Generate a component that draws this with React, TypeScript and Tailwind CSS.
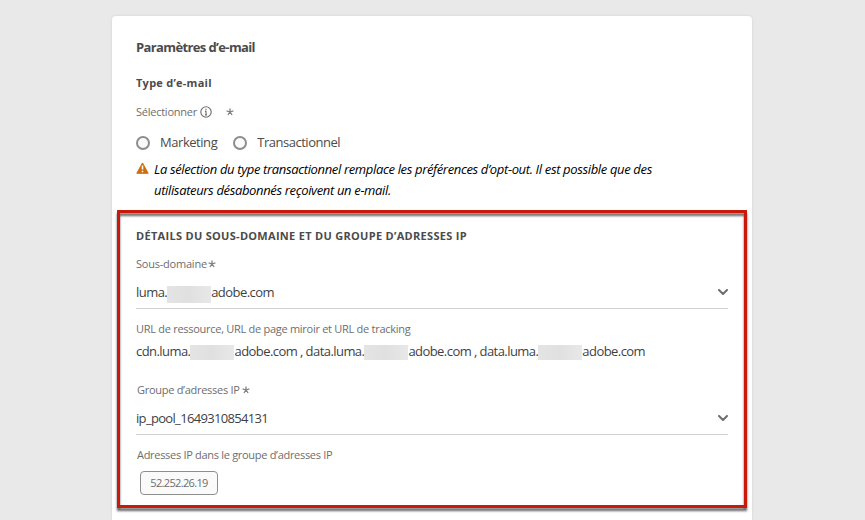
import React from 'react';

function Star({ className = '' }: { className?: string }) {
  return (
    <svg viewBox="0 0 8 8" className={`h-2 w-2 shrink-0 ${className}`} fill="none" stroke="#808080" strokeWidth="1.3">
      <path d="M4 4V.4M4 4 .6 2.9M4 4l3.4-1.1M4 4 1.9 7M4 4l2.1 3" />
    </svg>
  );
}

function Chevron() {
  return (
    <svg viewBox="0 0 10 6" className="mb-px h-1.5 w-2.5 shrink-0" fill="none" stroke="#6e6e6e" strokeWidth="2">
      <path d="m1 1 4 4 4-4" strokeLinecap="round" strokeLinejoin="round" />
    </svg>
  );
}

function Redacted({ className }: { className: string }) {
  return <span className={`w-11 shrink-0 bg-linear-to-r from-[#e4e4e4] via-[#e0e0e0] to-[#e8e8e8] ${className}`} />;
}

function Radio({ label, className }: { label: string; className: string }) {
  return (
    <label className={`flex items-center ${className}`}>
      <span className="mt-px h-3.5 w-3.5 shrink-0 rounded-full border-2 border-[#8e8e8e] bg-[#fafafa]" />
      <span className="ml-2.5 text-[13px] text-[#4b4b4b]">{label}</span>
    </label>
  );
}

export default function App() {
  return (
    <div className="flex h-[520px] w-[865px] items-stretch overflow-hidden bg-[#e9e9e9] pt-4 pl-28 font-['Open_Sans','Noto_Sans',sans-serif] leading-5 whitespace-nowrap">
      <main className="w-[640px] rounded-t-[4px] bg-white pt-[21px] shadow-[0_0_3px_rgba(0,0,0,0.1)]">
        <section className="px-6">
          <h1 className="flex h-5 text-[13px] font-bold tracking-[-0.62px] text-[#4b4b4b]">Paramètres d’e-mail</h1>
          <h2 className="mt-4 flex h-5 text-[11px] font-bold tracking-[0.25px] text-[#4b4b4b]">Type d’e-mail</h2>
          <div className="mt-[9px] flex h-5 items-center text-[11px] tracking-[-0.25px] text-[#6e6e6e]">
            <span>Sélectionner</span>
            <svg viewBox="0 0 12 12" className="ml-[3px] h-3 w-3" fill="none" stroke="#6e6e6e">
              <circle cx="6" cy="6" r="5.2" strokeWidth="1.1" />
              <path d="M6 5v4M6 2.8v1.4M5 5.4h1M5 8.9h2" strokeWidth="1.1" />
            </svg>
            <Star className="ml-3.5" />
          </div>
          <div className="mt-2.5 flex h-5 items-center">
            <Radio label="Marketing" className="tracking-[-0.45px]" />
            <Radio label="Transactionnel" className="ml-4 tracking-[-0.48px]" />
          </div>
          <div className="mt-[7px] flex text-[13px] leading-[21px] tracking-[-0.35px] text-black italic">
            <svg viewBox="0 0 13 12" className="mt-[3px] h-3 w-[13px] shrink-0">
              <path d="M6.5 .9 12.2 11.3H.8Z" fill="#cb6f10" stroke="#cb6f10" strokeLinejoin="round" />
              <path d="M6.5 3.6v4M6.5 8.8v1.5" stroke="white" strokeWidth="1.5" />
            </svg>
            <p className="ml-[5px]">
              La sélection du type transactionnel remplace les préférences d’opt-out. Il est possible que des
              <br />
              utilisateurs désabonnés reçoivent un e-mail.
            </p>
          </div>
        </section>
        <section className="relative mx-[5px] mt-[9px] h-[298px] px-[19px] pt-4 text-[#6e6e6e]">
          <div className="pointer-events-none absolute inset-0 border-3 border-[#c9190b] drop-shadow-[0_3px_1px_rgba(0,0,0,0.6)]" />
          <h2 className="flex h-5 text-[11px] font-bold tracking-[0.3px] text-[#4b4b4b]">DÉTAILS DU SOUS-DOMAINE ET DU GROUPE D’ADRESSES IP</h2>
          <div className="mt-2 flex h-5 items-center text-[11px] tracking-[-0.22px]">
            <span>Sous-domaine</span>
            <Star className="ml-px" />
          </div>
          <div className="mt-[3px] flex h-8 items-center border-b border-[#d0d0d0] text-[13px] tracking-[-0.55px] text-[#3f3f3f]">
            <span className="mb-0.5">luma.</span>
            <Redacted className="mt-1 h-[17px]" />
            <span className="mb-0.5">adobe.com</span>
            <span className="ml-auto flex"><Chevron /></span>
          </div>
          <div className="mt-2.5 flex h-5 text-[11px] tracking-[-0.28px]">URL de ressource, URL de page miroir et URL de tracking</div>
          <div className="mt-[3px] flex h-5 items-center text-[13px] tracking-[-0.56px] text-[#3f3f3f]">
            <span className="mb-0.5">cdn.luma.</span>
            <Redacted className="mt-px h-[15px]" />
            <span className="mb-0.5">adobe.com , data.luma.</span>
            <Redacted className="mt-px h-[15px]" />
            <span className="mb-0.5">adobe.com , data.luma.</span>
            <Redacted className="mt-px h-[15px]" />
            <span className="mb-0.5">adobe.com</span>
          </div>
          <div className="mt-[18px] ml-px flex h-5 items-center text-[11px] tracking-[-0.28px]">
            <span>Groupe d’adresses IP</span>
            <Star className="ml-0.5" />
          </div>
          <div className="mt-[3px] flex h-8 items-center border-b border-[#d0d0d0] text-[13px] tracking-[-0.67px] text-[#3f3f3f]">
            <span className="mb-0.5">ip_pool_1649310854131</span>
            <span className="ml-auto flex"><Chevron /></span>
          </div>
          <div className="mt-2.5 ml-px flex h-5 text-[11px] tracking-[-0.3px]">Adresses IP dans le groupe d’adresses IP</div>
          <div className="mt-1.5 ml-1 flex h-6 w-[78px] items-center justify-center rounded-[4px] border border-[#8e8e8e] bg-[#fafafa] text-[11px] tracking-[-0.65px]">
            52.252.26.19
          </div>
        </section>
      </main>
    </div>
  );
}
